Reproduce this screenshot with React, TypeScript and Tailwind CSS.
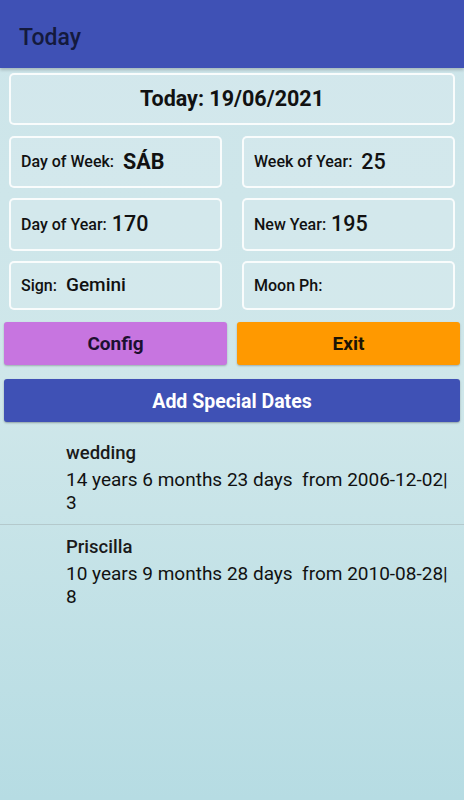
import React from "react"

const entries = [
    { name: "wedding", text: "14 years 6 months 23 days  from 2006-12-02|", tail: "3" },
    { name: "Priscilla", text: "10 years 9 months 28 days  from 2010-08-28|", tail: "8" },
]

function InfoBox({ label, value, valueClass }: { label: string; value?: string; valueClass?: string }) {
    return (
        <div className="flex h-full items-center rounded-[5px] border-2 border-white/85 bg-white/10 pl-[10px]">
            <span className="text-[16px] font-medium text-[#111]">{label}</span>
            {value && <span className={"text-[#111] " + (valueClass ?? "")}>{value}</span>}
        </div>
    )
}

export default function App() {
    return (
        <div
            className="flex h-[800px] w-[464px] flex-col overflow-hidden bg-gradient-to-b from-[#cde5ea] via-[#cfe7ea] to-[#b6dce3]"
            style={{ fontFamily: "Roboto, 'Noto Sans', sans-serif" }}
        >
            <div className="flex h-[68px] items-center bg-[#3f51b5] pl-[19px] pt-[8px] shadow-[0_2px_3px_rgba(0,0,0,0.2)]">
                <span className="text-[23px] font-medium text-[#141a3d]">Today</span>
            </div>

            <div className="flex flex-col px-[9px] pt-[5px]">
                <div className="flex h-[52px] items-center justify-center rounded-[5px] border-2 border-white/85 bg-white/10">
                    <span className="text-[21.5px] font-bold text-[#111]">Today: 19/06/2021</span>
                </div>

                <div className="mt-[11px] grid grid-cols-2 gap-x-[20px] gap-y-[10px]">
                    <div className="h-[52px]">
                        <InfoBox label="Day of Week:" value="SÁB" valueClass="ml-[9px] text-[21.5px] font-bold" />
                    </div>
                    <div className="h-[52px]">
                        <InfoBox label="Week of Year:" value="25" valueClass="ml-[9px] text-[21.5px] font-medium" />
                    </div>
                    <div className="h-[53px]">
                        <InfoBox label="Day of Year:" value="170" valueClass="ml-[5px] text-[21.5px] font-medium" />
                    </div>
                    <div className="h-[53px]">
                        <InfoBox label="New Year:" value="195" valueClass="ml-[5px] text-[21.5px] font-medium" />
                    </div>
                    <div className="h-[49px]">
                        <InfoBox label="Sign:" value="Gemini" valueClass="ml-[9px] text-[19px] font-medium" />
                    </div>
                    <div className="h-[49px]">
                        <InfoBox label="Moon Ph:" />
                    </div>
                </div>
            </div>

            <div className="mt-[12px] grid grid-cols-2 gap-x-[10px] px-[4px]">
                <button className="flex h-[43px] items-center justify-center rounded-[3px] bg-[#c775e0] pt-[2px] text-[19px] font-bold text-[#1c1030] shadow-[0_1px_2px_rgba(0,0,0,0.25)]">
                    Config
                </button>
                <button className="flex h-[43px] items-center justify-center rounded-[3px] bg-[#ff9900] pt-[2px] text-[19px] font-bold text-[#1c1405] shadow-[0_1px_2px_rgba(0,0,0,0.25)]">
                    Exit
                </button>
            </div>

            <div className="mt-[14px] px-[4px]">
                <button className="flex h-[43px] w-full items-center justify-center rounded-[3px] bg-[#3f51b5] pt-[2px] text-[19.5px] font-bold text-white shadow-[0_1px_2px_rgba(0,0,0,0.3)]">
                    Add Special Dates
                </button>
            </div>

            <div className="mt-[20px] flex flex-col">
                {entries.map((e, i) => (
                    <div key={e.name} className={i === 0 ? "border-b border-[#b4c9cc] pb-[10px]" : "pt-[11px]"}>
                        <div className="pl-[66px] text-[18.5px] font-medium leading-[22px] text-[#1a1a1a]">{e.name}</div>
                        <div className="mt-[4px] whitespace-pre pl-[66px] text-[19px] leading-[23px] text-[#111]">{e.text}</div>
                        <div className="pl-[66px] text-[19px] leading-[23px] text-[#111]">{e.tail}</div>
                    </div>
                ))}
            </div>
        </div>
    )
}
